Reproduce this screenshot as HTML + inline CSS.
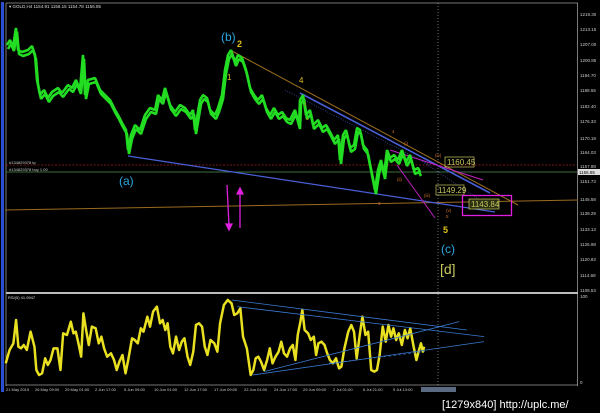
<!DOCTYPE html>
<html><head><style>
html,body{margin:0;padding:0;background:#000;width:600px;height:413px;overflow:hidden}
svg{display:block;font-family:"Liberation Sans",sans-serif}
</style></head><body>
<svg width="600" height="413" viewBox="0 0 600 413">
<rect width="600" height="413" fill="#000"/>
<rect x="1" y="2" width="3" height="390" fill="#2a4fd0"/>
<line x1="6" y1="3" x2="6" y2="386" stroke="#9a9a9a" stroke-width="0.8"/>
<line x1="577.5" y1="3" x2="577.5" y2="386" stroke="#9a9a9a" stroke-width="0.8"/>
<line x1="6" y1="3" x2="578" y2="3" stroke="#9a9a9a" stroke-width="0.8"/>
<rect x="6" y="292" width="572" height="2" fill="#bdbdbd"/>
<line x1="6" y1="385" x2="578" y2="385" stroke="#9a9a9a" stroke-width="0.8"/>
<text x="9" y="8" font-size="4.5" fill="#ddd">▾ GOLD,H4 1154.91 1156.15 1154.78 1156.85</text>
<line x1="6" y1="165" x2="577" y2="165" stroke="#a02020" stroke-width="0.7" stroke-dasharray="2,1.5"/>
<line x1="6" y1="172" x2="577" y2="172" stroke="#3c6e3c" stroke-width="1"/>
<text x="9" y="164" font-size="4" fill="#ccc">#134829378 tp</text>
<text x="9" y="171" font-size="4" fill="#ccc">#134829378 buy 1.00</text>
<line x1="438" y1="3" x2="438" y2="390" stroke="#bbb" stroke-width="0.6" stroke-dasharray="1,2"/>
<line x1="5" y1="210" x2="578" y2="200" stroke="#9a6a20" stroke-width="1"/>
<line x1="128" y1="156" x2="495" y2="212" stroke="#4a5fd8" stroke-width="1.3"/>
<line x1="230" y1="50" x2="518" y2="205" stroke="#a07020" stroke-width="1"/>
<line x1="300" y1="93" x2="490" y2="193" stroke="#4a5fd8" stroke-width="1.6"/>
<line x1="285" y1="90" x2="430" y2="165" stroke="#4a5fd8" stroke-width="0.6" stroke-dasharray="1,1.5"/>
<line x1="420" y1="160" x2="495" y2="210" stroke="#4a5fd8" stroke-width="0.6" stroke-dasharray="1,1.5"/>
<line x1="390" y1="150" x2="483" y2="180" stroke="#c020c0" stroke-width="1"/>
<line x1="397" y1="165" x2="435" y2="218" stroke="#c020c0" stroke-width="1"/>
<g fill="none" stroke="#22dd22" stroke-linejoin="bevel">
<polyline id="p" stroke-width="2.6" points="7,45 10,40 13,47 16,28 18,50 22,52 28,50 32,46 35,55 37,80 40,95 44,90 48,98 52,92 58,88 62,93 68,85 72,88 76,80 80,90 83,55 85,95 88,80 95,78 100,90 105,95 110,100 115,110 118,115 122,123 126,130 128,150 131,135 135,125 140,130 145,115 150,108 155,110 158,95 162,100 165,88 170,105 175,112 180,105 185,108 190,115 193,110 195,130 198,112 200,100 203,95 207,98 210,110 215,115 218,108 222,95 225,70 228,55 231,50 235,62 238,55 242,58 246,70 250,88 254,95 258,100 262,95 266,108 270,115 274,108 278,115 282,112 286,118 290,120 295,110 299,125 300,100 303,95 306,115 310,110 313,125 318,120 322,128 326,125 330,132 334,140 338,135 340,160 343,135 346,130 350,148 354,145 357,128 360,130 363,145 367,150 370,165 372,175 375,190 378,170 381,160 384,175 387,150 390,158 394,155 398,160 402,150 406,162 410,155 414,170 418,168 420,172"/>
<use href="#p" transform="translate(1,4)" stroke-width="1.2"/>
</g>
<g stroke="#e020e0" stroke-width="1.3" fill="#e020e0">
<line x1="227" y1="185" x2="229" y2="225"/><polygon points="226,224 232,224 229,230"/>
<line x1="240" y1="228" x2="240" y2="193"/><polygon points="237,194 243,194 240,188"/>
</g>
<text x="221" y="41" font-size="12" fill="#2aa8e0">(b)</text>
<text x="237" y="47" font-size="9" fill="#e0c020" font-weight="bold">2</text>
<text x="227" y="80" font-size="8" fill="#e0c020">1</text>
<text x="299" y="83" font-size="8" fill="#e0c020">4</text>
<text x="119" y="185" font-size="12" fill="#2aa8e0">(a)</text>
<text x="443" y="233" font-size="9" fill="#e0c020" font-weight="bold">5</text>
<text x="441" y="253" font-size="12" fill="#2aa8e0">(c)</text>
<text x="440" y="274" font-size="14" fill="#c8c860">[d]</text>
<g font-size="4.5" fill="#d0702a">
<text x="304" y="106">2</text><text x="306" y="120">1</text><text x="392" y="133">4</text>
<text x="404" y="145">(i)</text><text x="435" y="157">(iv)</text><text x="397" y="181">(ii)</text>
<text x="424" y="197">(iii)</text><text x="446" y="212">(v)</text><text x="378" y="205">3</text><text x="446" y="218">5</text>
</g>
<rect x="445" y="157" width="29" height="10" fill="none" stroke="#c8c860" stroke-width="0.7"/>
<text x="447" y="165" font-size="8" fill="#c8c860">1160.45</text>
<rect x="436" y="185" width="28" height="10" fill="none" stroke="#c8c860" stroke-width="0.7"/>
<text x="438" y="193" font-size="8" fill="#c8c860">1149.29</text>
<rect x="462.5" y="195.5" width="49" height="20" fill="none" stroke="#e020e0" stroke-width="1.3"/>
<rect x="469" y="199" width="30" height="10" fill="#2a3010" stroke="#c8c860" stroke-width="0.7"/>
<text x="471" y="207" font-size="8" fill="#c8c860">1143.84</text>
<g font-size="4.5" fill="#ccc">
<text x="580" y="16">1219.30</text><text x="580" y="31">1213.15</text><text x="580" y="46">1207.00</text>
<text x="580" y="62">1200.85</text><text x="580" y="77">1194.70</text><text x="580" y="92">1188.55</text>
<text x="580" y="108">1182.40</text><text x="580" y="123">1176.33</text><text x="580" y="140">1170.18</text>
<text x="580" y="154">1164.03</text><text x="580" y="168">1157.88</text><text x="580" y="183">1151.73</text>
<text x="580" y="201">1145.58</text><text x="580" y="215">1139.29</text><text x="580" y="231">1133.13</text>
<text x="580" y="246">1126.98</text><text x="580" y="261">1120.83</text><text x="580" y="277">1114.68</text>
<text x="580" y="292">1108.53</text><text x="580" y="298">100</text><text x="580" y="384">0</text>
</g>
<rect x="578" y="169" width="22" height="6" fill="#ddd"/>
<text x="579" y="174" font-size="4.5" fill="#000">1156.85</text>
<text x="8" y="299" font-size="4" fill="#ddd">RSI(5) 41.9947</text>
<g transform="translate(0,290) scale(0.3827,0.3333)">
<polyline fill="none" stroke="#e8e020" stroke-width="2.5" vector-effect="non-scaling-stroke" stroke-linejoin="round" points="15,220 25,180 35,160 42,90 48,170 55,175 62,165 70,180 80,125 90,170 95,240 102,255 110,250 118,205 125,225 132,210 140,175 150,175 158,240 165,130 175,135 185,95 192,130 198,125 205,160 212,200 218,70 225,120 232,165 240,110 250,115 258,160 265,140 272,175 280,200 290,190 298,210 305,240 312,215 320,195 328,250 335,210 345,145 352,150 360,160 368,115 375,125 385,80 392,110 400,65 410,50 418,100 425,90 432,120 438,100 445,170 452,190 460,140 468,180 475,155 482,145 490,200 497,225 505,185 512,105 520,100 528,110 535,170 542,195 550,150 560,160 568,185 575,100 585,45 595,30 605,40 612,75 620,70 628,55 635,140 645,175 655,255 662,240 668,205 675,200 682,215 690,240 698,210 705,175 712,220 720,200 728,185 735,155 742,190 750,200 758,175 765,165 772,210 778,135 785,95 790,60 796,120 805,130 812,150 820,140 826,195 832,160 840,155 848,165 855,190 862,210 870,220 878,205 886,235 892,230 900,175 910,125 918,105 925,125 932,205 940,135 947,80 955,135 962,125 970,240 978,245 985,240 992,195 1000,110 1008,155 1015,105 1022,140 1028,115 1035,150 1042,130 1050,165 1058,120 1065,145 1072,115 1080,165 1088,210 1095,180 1100,160 1105,185 1108,170"/>
<g stroke="#3a7ad0" stroke-width="0.8" fill="none">
<line x1="605" y1="30" x2="1220" y2="120" vector-effect="non-scaling-stroke"/>
<line x1="620" y1="50" x2="1265" y2="140" vector-effect="non-scaling-stroke"/>
<line x1="660" y1="255" x2="1265" y2="155" vector-effect="non-scaling-stroke"/>
<line x1="690" y1="245" x2="1200" y2="95" vector-effect="non-scaling-stroke"/>
<line x1="860" y1="220" x2="1110" y2="185" stroke-dasharray="2,3" vector-effect="non-scaling-stroke"/>
</g>
</g>
<g font-size="4" fill="#ccc">
<text x="6" y="391">21 May 2015</text><text x="35" y="391">26 May 09:00</text><text x="65" y="391">29 May 01:00</text>
<text x="95" y="391">2 Jun 17:00</text><text x="124" y="391">5 Jun 09:00</text><text x="154" y="391">10 Jun 01:00</text>
<text x="184" y="391">12 Jun 17:00</text><text x="214" y="391">17 Jun 09:00</text><text x="244" y="391">22 Jun 01:00</text>
<text x="274" y="391">24 Jun 17:00</text><text x="303" y="391">29 Jun 09:00</text><text x="333" y="391">2 Jul 01:00</text>
<text x="363" y="391">6 Jul 21:00</text><text x="393" y="391">9 Jul 13:00</text>
</g>
<rect x="421" y="387" width="35" height="5" fill="#5a6a80"/>
<text x="442" y="408" font-size="11" fill="#fff">[1279x840] http://uplc.me/</text>
</svg>
</body></html>
